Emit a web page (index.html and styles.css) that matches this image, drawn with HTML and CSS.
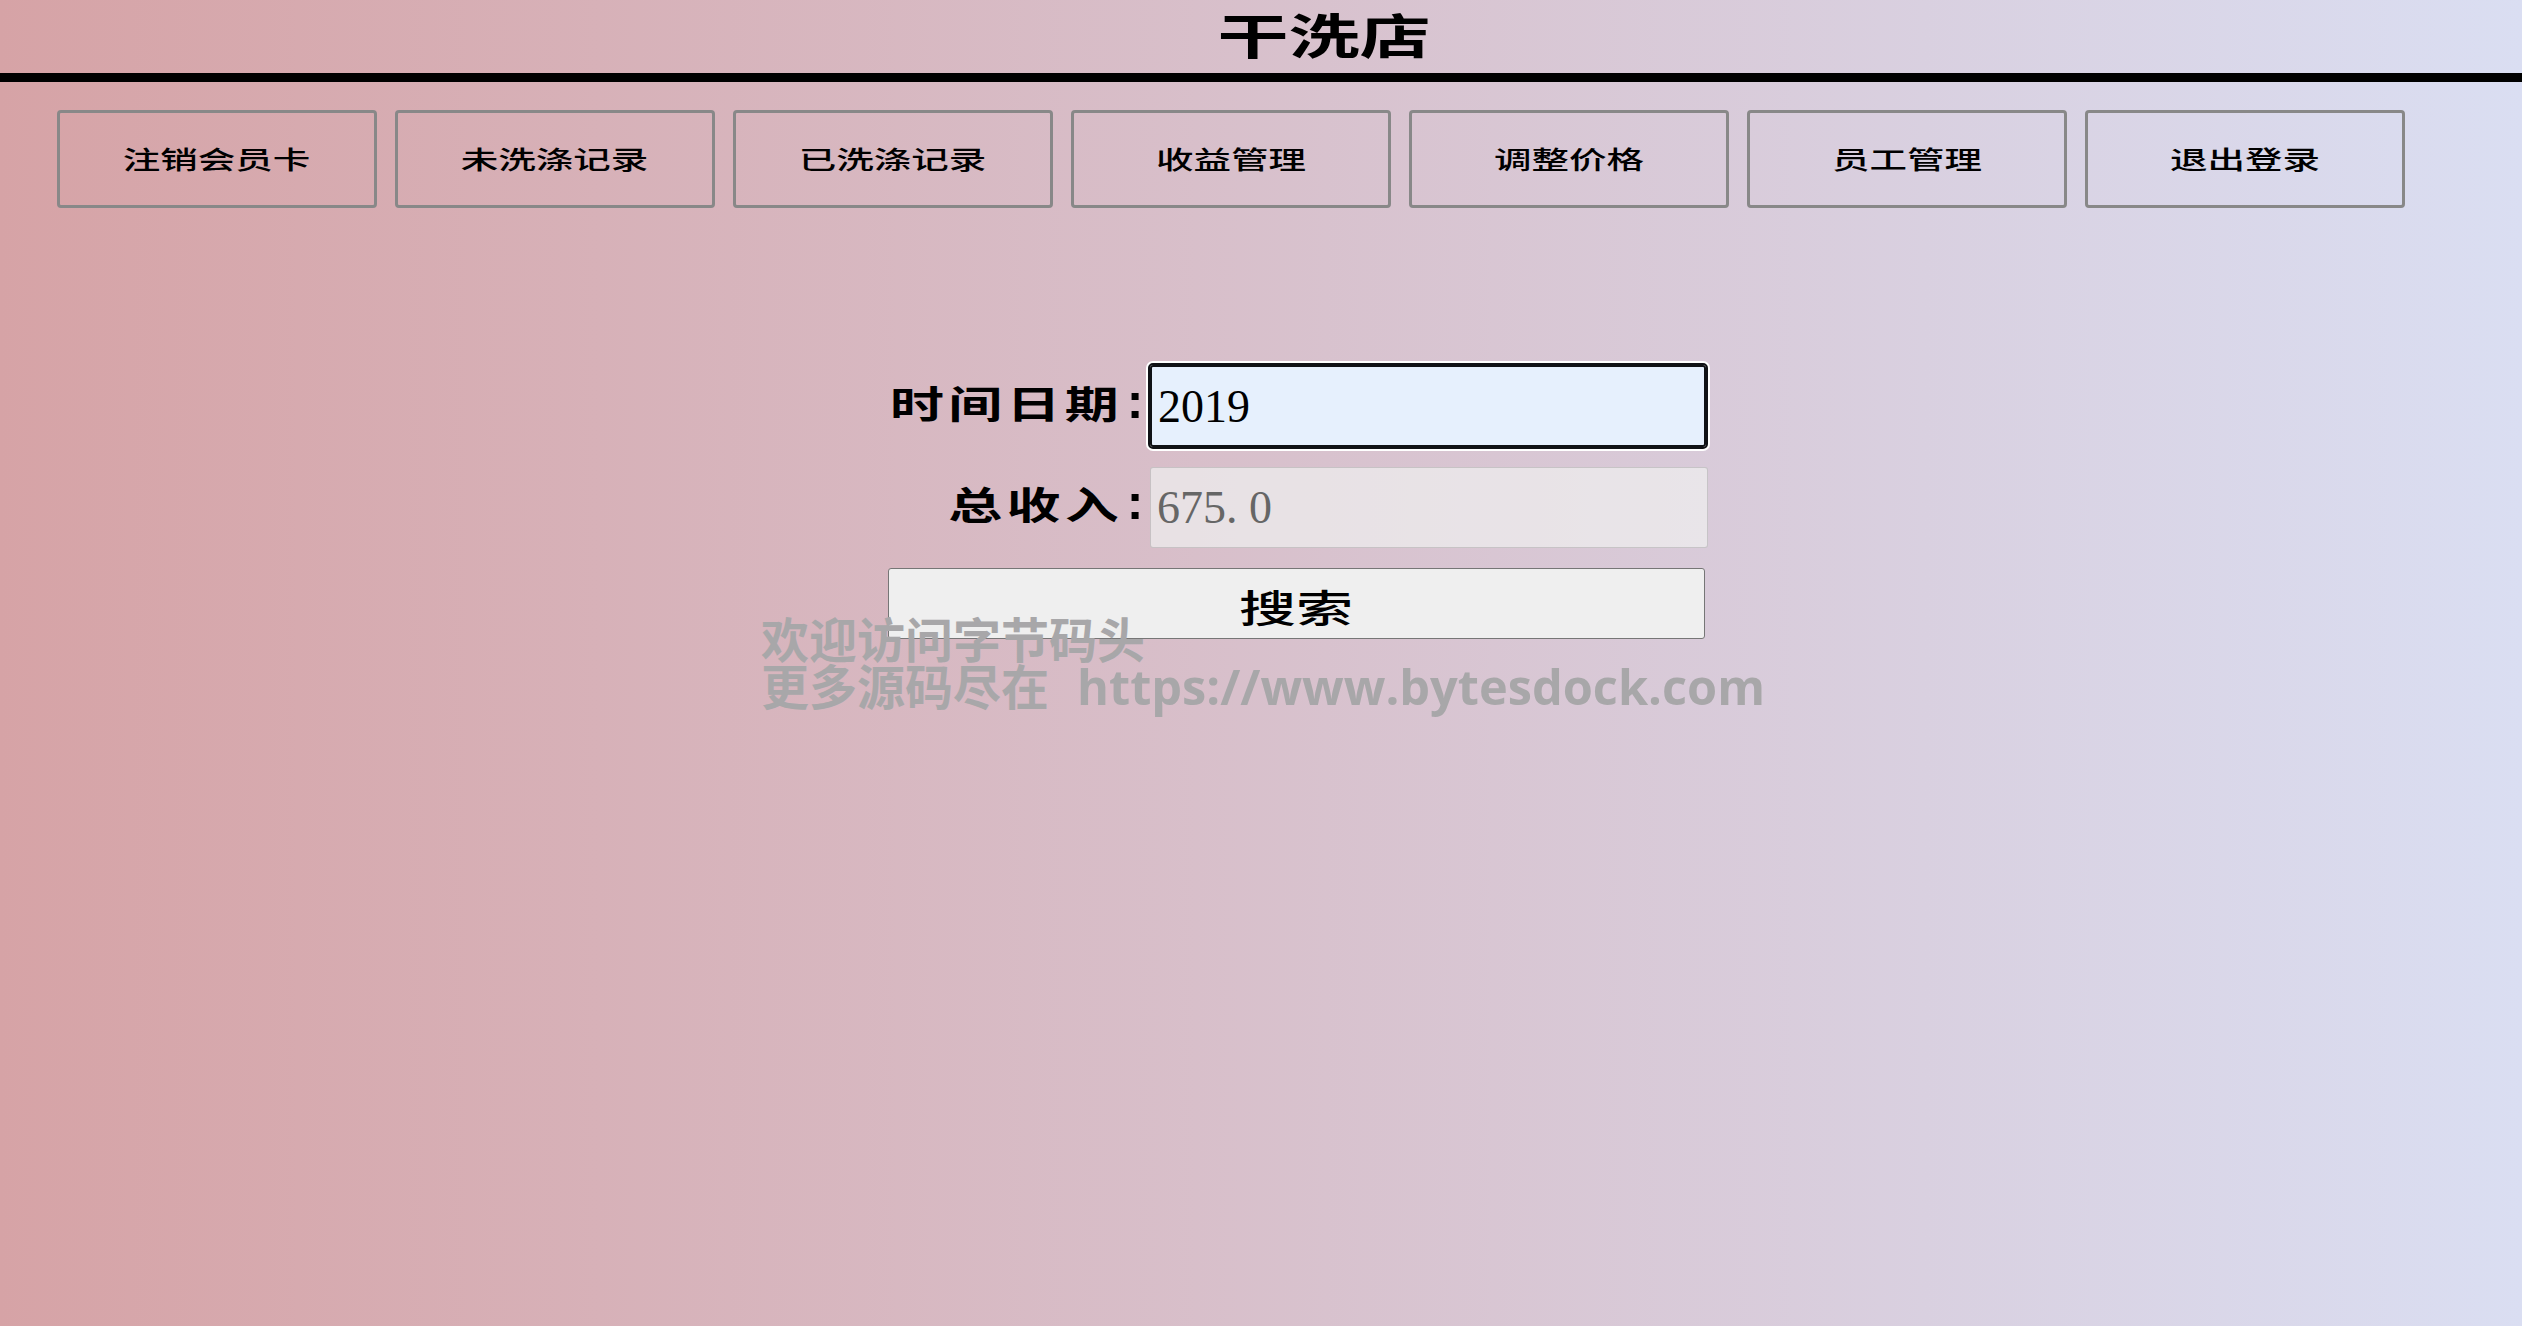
FILE: index.html
```html
<!DOCTYPE html>
<html lang="zh-CN">
  <head>
    <meta charset="UTF-8" />
    <title>干洗店</title>
    <link rel="stylesheet" href="styles.css">
  </head>
  <body>
    <header class="header">
      <h1 class="title"><span class="wide">干洗店</span></h1>
    </header>

    <nav class="nav">
      <button class="nav-btn"><span class="wide">注销会员卡</span></button>
      <button class="nav-btn"><span class="wide">未洗涤记录</span></button>
      <button class="nav-btn"><span class="wide">已洗涤记录</span></button>
      <button class="nav-btn"><span class="wide">收益管理</span></button>
      <button class="nav-btn"><span class="wide">调整价格</span></button>
      <button class="nav-btn"><span class="wide">员工管理</span></button>
      <button class="nav-btn"><span class="wide">退出登录</span></button>
    </nav>

    <form class="search-form">
      <div class="field field-date">
        <label class="field-label"><span class="label-text">时间日期</span><span class="colon">:</span></label>
        <input class="field-input input-active" type="text" value="2019" />
      </div>
      <div class="field">
        <label class="field-label"><span class="label-text">总收入</span><span class="colon">:</span></label>
        <input class="field-input" type="text" value="675. 0" disabled />
      </div>
      <button class="search-btn" type="button"><span class="wide">搜索</span></button>
    </form>

    <div class="watermark">
      <div>欢迎访问字节码头</div>
      <div>更多源码尽在<span class="watermark-url">https://www.bytesdock.com</span></div>
    </div>
  </body>
</html>
```

FILE: styles.css
```css
html,
body {
  height: 100%;
}

body {
  margin: 0;
  min-height: 1326px;
  position: relative;
  overflow: hidden;
  background: linear-gradient(to right, #d6a3a6, #dadef2);
  font-family: "Noto Sans CJK SC", sans-serif;
  color: #000;
}

.wide {
  display: inline-block;
  transform: scaleX(1.5);
}

.header {
  height: 73px;
  padding-left: 126px;
  border-bottom: 9px solid #000;
  text-align: center;
}

.title {
  margin: 0;
  font-size: 48px;
  line-height: 66px;
  font-weight: bold;
}

.title .wide {
  transform: scaleX(1.48);
}

.nav {
  display: flex;
  gap: 18px;
  margin-top: 28px;
  padding-left: 57px;
}

.nav-btn {
  width: 320px;
  height: 98px;
  padding: 0 0 3px;
  background: transparent;
  border: 3px solid #888;
  border-radius: 4px;
  font-family: inherit;
  font-size: 25px;
  font-weight: 500;
  color: #000;
}

.search-form {
  display: flex;
  flex-direction: column;
  gap: 20px;
  width: 820px;
  margin: 157px 0 0 888px;
}

.field {
  display: flex;
  align-items: center;
  height: 81px;
}

.field-date {
  height: 82px;
}

.field-label {
  display: flex;
  justify-content: flex-end;
  align-items: center;
  width: 262px;
  flex-shrink: 0;
}

.label-text {
  display: inline-block;
  font-size: 38px;
  font-weight: bold;
  line-height: 50px;
  letter-spacing: 3px;
  transform: scaleX(1.42);
  transform-origin: right center;
  margin-top: -9px;
  margin-right: -3px;
}

.colon {
  width: 30px;
  text-align: center;
  font-family: "Liberation Sans", sans-serif;
  font-size: 50px;
  font-weight: bold;
  line-height: 50px;
  margin-top: -11px;
}

.field-input {
  box-sizing: border-box;
  width: 558px;
  height: 100%;
  padding: 0 6px;
  border: 1px solid rgba(118, 118, 118, 0.3);
  border-radius: 3px;
  background: rgba(239, 239, 239, 0.72);
  font-family: "Liberation Serif", serif;
  font-size: 46px;
  color: #666;
}

.input-active {
  width: 556px;
  background: #e6f0fd;
  border: 2px solid #101216;
  outline: 2px solid #101216;
  box-shadow: 0 0 0 4px #fff;
  color: #000;
}

.search-btn {
  width: 817px;
  height: 71px;
  padding: 3px 0 0;
  background: #efefef;
  border: 1px solid #767676;
  border-radius: 3px;
  font-family: inherit;
  font-size: 38px;
  font-weight: 500;
  color: #000;
}

/* site watermark burned into the picture, sits on top of the form */
.watermark {
  position: absolute;
  left: 761px;
  top: 614px;
  font-size: 48px;
  font-weight: bold;
  line-height: 47px;
  color: #a8a7a9;
  white-space: nowrap;
}

.watermark-url {
  margin-left: 28px;
  font-family: "Open Sans", sans-serif;
  font-size: 48.7px;
}
```
